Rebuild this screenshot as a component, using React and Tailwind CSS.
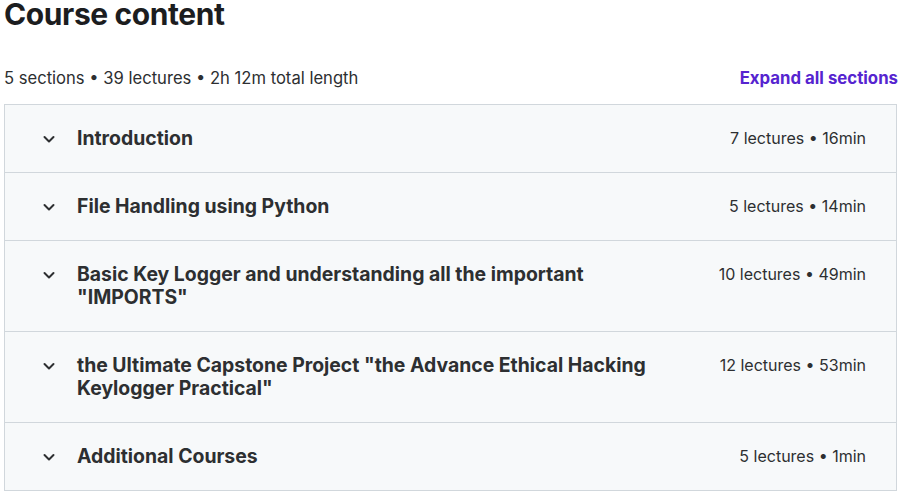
import React from "react";

const sections = [
  { title: "Introduction", meta: "7 lectures • 16min" },
  { title: "File Handling using Python", meta: "5 lectures • 14min" },
  { title: 'Basic Key Logger and understanding all the important "IMPORTS"', meta: "10 lectures • 49min" },
  { title: 'the Ultimate Capstone Project "the Advance Ethical Hacking Keylogger Practical"', meta: "12 lectures • 53min" },
  { title: "Additional Courses", meta: "5 lectures • 1min" },
];

function Chevron() {
  return (
    <svg width="16" height="16" viewBox="0 0 16 16" className="shrink-0 mt-[4px]" fill="none">
      <path d="M3.5 6 L8 10.5 L12.5 6" stroke="#2d2f31" strokeWidth="2" strokeLinecap="round" strokeLinejoin="round" />
    </svg>
  );
}

export default function App() {
  return (
    <div className="w-[900px] h-[493px] bg-white overflow-hidden px-[4px] text-[#2d2f31]" style={{ fontFamily: "Inter, 'Noto Sans', sans-serif" }}>
      <h2 className="text-[30px] leading-[32px] -mt-[2px] font-bold tracking-[-0.4px] text-[#1c1d1f]">Course content</h2>
      <div className="mt-[38px] flex items-center justify-between h-[20px]">
        <span className="text-[16.6px] leading-[20px] text-[#2d2f31]">5 sections • 39 lectures • 2h 12m total length</span>
        <span className="text-[16.8px] leading-[20px] font-bold text-[#5624d0] mr-[-2px]">Expand all sections</span>
      </div>
      <div className="mt-[16px] border border-[#d1d7dc] w-[893px]">
        {sections.map((s, i) => (
          <div key={i} className={`flex items-start bg-[#f7f9fa] py-[22px] pl-[36px] pr-[30px] ${i > 0 ? "border-t border-[#d1d7dc]" : ""}`}>
            <Chevron />
            <div className="ml-[20px] flex-1 text-[19.4px] leading-[23px] font-bold text-[#2d2f31] pr-[60px]">{s.title}</div>
            <div className="text-[16px] leading-[23px] text-[#2d2f31] whitespace-nowrap">{s.meta}</div>
          </div>
        ))}
      </div>
    </div>
  );
}
